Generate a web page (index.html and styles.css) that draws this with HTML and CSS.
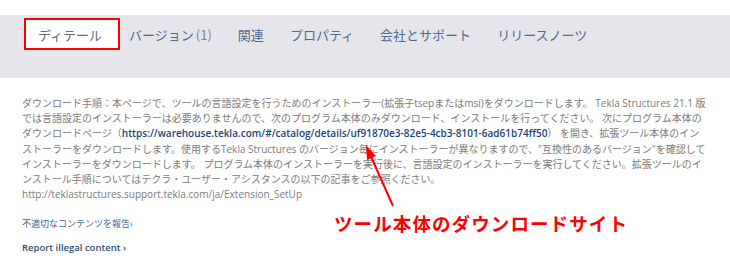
FILE: index.html
```html
<!DOCTYPE html>
<html>
<head>
    <title>拡張ツール ディテール</title>
    <link rel="stylesheet" href="styles.css">
</head>
<body>
    <div class="tab-band">
        <ul class="tabs">
            <li class="tab active">ディテール</li>
            <li class="tab">バージョン<span class="count">(1)</span></li>
            <li class="tab">関連</li>
            <li class="tab">プロパティ</li>
            <li class="tab">会社とサポート</li>
            <li class="tab">リリースノーツ</li>
        </ul>
    </div>

    <div class="content">
        <p class="description">
            ダウンロード手順：本ページで、ツールの言語設定を行うためのインストーラー(拡張子tsepまたはmsi)をダウンロードします。 Tekla Structures 21.1 版<br>
            では言語設定のインストーラーは必要ありませんので、次のプログラム本体のみダウンロード、インストールを行ってください。 次にプログラム本体の<br>
            ダウンロードページ（<a class="strong-link" href="#">https://warehouse.tekla.com/#/catalog/details/uf91870e3-82e5-4cb3-8101-6ad61b74ff50</a>） を開き、拡張ツール本体のイン<br>
            ストーラーをダウンロードします。使用するTekla Structures のバージョン毎にインストーラーが異なりますので、"互換性のあるバージョン"を確認して<br>
            インストーラーをダウンロードします。 プログラム本体のインストーラーを実行後に、言語設定のインストーラーを実行してください。拡張ツールのイ<br>
            ンストール手順についてはテクラ・ユーザー・アシスタンスの以下の記事をご参照ください。<br>
            http://teklastructures.support.tekla.com/ja/Extension_SetUp
        </p>

        <a class="report" href="#">不適切なコンテンツを報告›</a>
        <a class="report report-en" href="#">Report illegal content ›</a>

        <!-- annotation drawn over the page -->
        <svg class="arrow" width="40" height="70" viewBox="0 0 40 70">
            <line x1="30" y1="63" x2="6" y2="9" stroke="#f00" stroke-width="2"/>
            <polygon points="3,2 4,17 13,13" fill="#f00"/>
        </svg>
        <div class="note">ツール本体のダウンロードサイト</div>
    </div>
</body>
</html>
```

FILE: styles.css
```css
body {
    margin: 0;
    padding: 15px 0 0;
    font-family: "Open Sans", "Noto Sans CJK JP", sans-serif;
    background-color: #fff;
}

.tab-band {
    height: 63px;
    padding: 3px 0 0 24px;
    box-sizing: border-box;
    background-color: #e6e5eb;
}

.tabs {
    display: flex;
    margin: 0;
    padding: 0;
    list-style: none;
}

.tab {
    height: 32px;
    padding: 0 11px;
    border: 2px solid transparent;
    box-sizing: border-box;
    display: flex;
    align-items: center;
    font-family: "Noto Sans CJK JP", sans-serif;
    font-size: 13px;
    color: #4d6a93;
}

.tab.active {
    padding: 0 16px 0 12px;
    margin-right: -4px;
    background-color: #fff;
    border-color: #f00;
    color: #5b6d86;
}

.count {
    margin-left: 2px;
    color: #7a8494;
}

.content {
    position: relative;
    padding: 18px 22px 0;
}

.description {
    margin: 0;
    font-size: 10px;
    line-height: 15.2px;
    color: #7b7b7b;
    white-space: nowrap;
}

.strong-link {
    color: #1c4478;
    font-weight: 600;
    text-decoration: none;
}

.report {
    display: block;
    margin-top: 15px;
    font-size: 9px;
    line-height: 14px;
    color: #3f6690;
    text-decoration: none;
}

.report-en {
    margin-top: 10px;
    font-size: 9.5px;
    font-weight: 600;
    color: #2f4d72;
}

.arrow {
    position: absolute;
    left: 363px;
    top: 65px;
}

.note {
    position: absolute;
    left: 334px;
    top: 132px;
    font-family: "Noto Sans CJK JP", sans-serif;
    font-size: 18.5px;
    font-weight: 700;
    letter-spacing: 1.1px;
    color: #f00;
    white-space: nowrap;
}
```
